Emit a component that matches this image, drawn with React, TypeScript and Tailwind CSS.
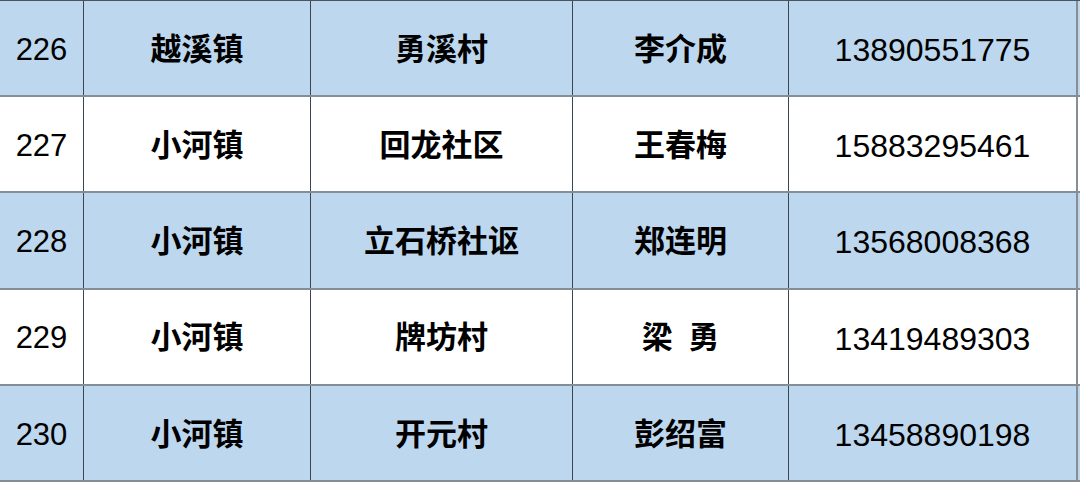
import React from "react";

const rows = [
  { no: "226", town: "越溪镇", village: "勇溪村", name: "李介成", phone: "13890551775" },
  { no: "227", town: "小河镇", village: "回龙社区", name: "王春梅", phone: "15883295461" },
  { no: "228", town: "小河镇", village: "立石桥社讴", name: "郑连明", phone: "13568008368" },
  { no: "229", town: "小河镇", village: "牌坊村", name: "梁\u2002勇", phone: "13419489303" },
  { no: "230", town: "小河镇", village: "开元村", name: "彭绍富", phone: "13458890198" },
];

export default function App() {
  return (
    <div
      className="w-[1080px] h-[483px] bg-white overflow-hidden text-black"
      style={{ fontFamily: '"Liberation Sans", "Noto Sans CJK SC", sans-serif' }}
    >
      <div className="border-t border-[#4a5560]">
        {rows.map((r, i) => (
          <div
            key={r.no}
            className={`grid grid-cols-[84px_227px_262px_216px_289px] h-[96.2px] border-b-2 border-[#858d96] ${
              i % 2 === 0 ? "bg-[#bdd7ee]" : "bg-white"
            }`}
          >
            <div className="flex items-center justify-center pt-1 border-r border-[#3c4650] text-[31px]">
              {r.no}
            </div>
            <div className="flex items-center justify-center pt-1 border-r border-[#3c4650] text-[31px] font-bold">
              {r.town}
            </div>
            <div className="flex items-center justify-center pt-1 border-r border-[#3c4650] text-[31px] font-bold">
              {r.village}
            </div>
            <div className="flex items-center justify-center pt-1 border-r border-[#3c4650] text-[31px] font-bold whitespace-pre">
              {r.name}
            </div>
            <div className="flex items-center justify-center pt-1 border-r-2 border-[#858d96] text-[32px]">
              {r.phone}
            </div>
          </div>
        ))}
      </div>
    </div>
  );
}
